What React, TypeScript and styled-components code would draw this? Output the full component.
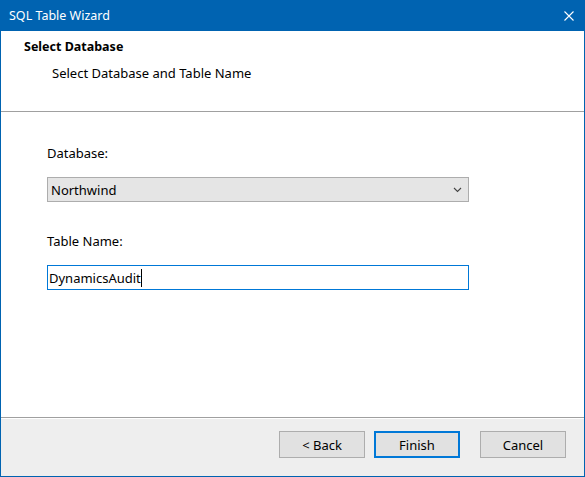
import styled, { createGlobalStyle } from "styled-components";

const GlobalStyle = createGlobalStyle`
  html, body {
    margin: 0;
    padding: 0;
    background: #ffffff;
  }
  * {
    box-sizing: border-box;
  }
`;

const Window = styled.div`
  width: 585px;
  height: 477px;
  border: 1px solid #0063b1;
  display: flex;
  flex-direction: column;
  font-family: "Noto Sans", "Open Sans", sans-serif;
  font-size: 13px;
  line-height: 16px;
  color: #000000;
  background: #ffffff;
`;

const TitleBar = styled.div`
  height: 30px;
  background: #0063b1;
  color: #ffffff;
  display: flex;
  align-items: center;
  justify-content: space-between;
  padding: 0 10px 0 8px;
`;

const TitleText = styled.span`
  font-size: 12.5px;
`;

const CloseIcon = styled.svg`
  width: 10px;
  height: 10px;
  display: block;
`;

const Header = styled.div`
  height: 81px;
  border-bottom: 1px solid #a0a0a0;
  padding: 8px 0 0 23px;
`;

const HeaderTitle = styled.div`
  font-weight: bold;
  font-size: 12.5px;
`;

const HeaderSubtitle = styled.div`
  margin-top: 10px;
  padding-left: 28px;
`;

const Content = styled.div`
  flex: 1;
  padding: 33px 0 0 46px;
  display: flex;
  flex-direction: column;
`;

const FieldLabel = styled.label<{ $gapTop?: number }>`
  display: block;
  margin-top: ${(p) => p.$gapTop ?? 0}px;
`;

const Select = styled.div`
  margin-top: 16px;
  width: 422px;
  height: 25px;
  background: #e5e5e5;
  border: 1px solid #adadad;
  display: flex;
  align-items: center;
  justify-content: space-between;
  padding: 0 6px 0 3px;
`;

const Chevron = styled.svg`
  width: 9px;
  height: 6px;
  display: block;
`;

const TextBox = styled.div`
  margin-top: 16px;
  width: 422px;
  height: 25px;
  border: 1px solid #0078d7;
  display: flex;
  align-items: center;
  padding-left: 1px;
`;

const Caret = styled.span`
  display: inline-block;
  width: 1px;
  height: 18px;
  background: #000000;
`;

const Footer = styled.div`
  height: 59px;
  border-top: 1px solid #a0a0a0;
  box-shadow: inset 0 1px 0 #ffffff;
  background: #eeeeee;
  display: flex;
  justify-content: flex-end;
  align-items: flex-start;
  padding: 13px 18px 0 0;
`;

const Button = styled.button<{ $primary?: boolean; $gap: number }>`
  width: 86px;
  height: 27px;
  margin-left: ${(p) => p.$gap}px;
  background: #e1e1e1;
  border: ${(p) => (p.$primary ? "2px solid #0078d7" : "1px solid #adadad")};
  font-family: inherit;
  font-size: 13px;
  color: #000000;
  padding: 0;
`;

export default function App() {
  return (
    <>
      <GlobalStyle />
      <Window>
        <TitleBar>
          <TitleText>SQL Table Wizard</TitleText>
          <CloseIcon viewBox="0 0 10 10">
            <path d="M0.5 0.5 L9.5 9.5 M9.5 0.5 L0.5 9.5" stroke="#ffffff" strokeWidth="1.1" />
          </CloseIcon>
        </TitleBar>
        <Header>
          <HeaderTitle>Select Database</HeaderTitle>
          <HeaderSubtitle>Select Database and Table Name</HeaderSubtitle>
        </Header>
        <Content>
          <FieldLabel>Database:</FieldLabel>
          <Select>
            <span>Northwind</span>
            <Chevron viewBox="0 0 9 6">
              <path d="M1 1 L4.5 4.5 L8 1" fill="none" stroke="#444444" strokeWidth="1.1" />
            </Chevron>
          </Select>
          <FieldLabel $gapTop={31}>Table Name:</FieldLabel>
          <TextBox>
            <span>DynamicsAudit</span>
            <Caret />
          </TextBox>
        </Content>
        <Footer>
          <Button $gap={0}>&lt; Back</Button>
          <Button $gap={9} $primary>Finish</Button>
          <Button $gap={20}>Cancel</Button>
        </Footer>
      </Window>
    </>
  );
}
